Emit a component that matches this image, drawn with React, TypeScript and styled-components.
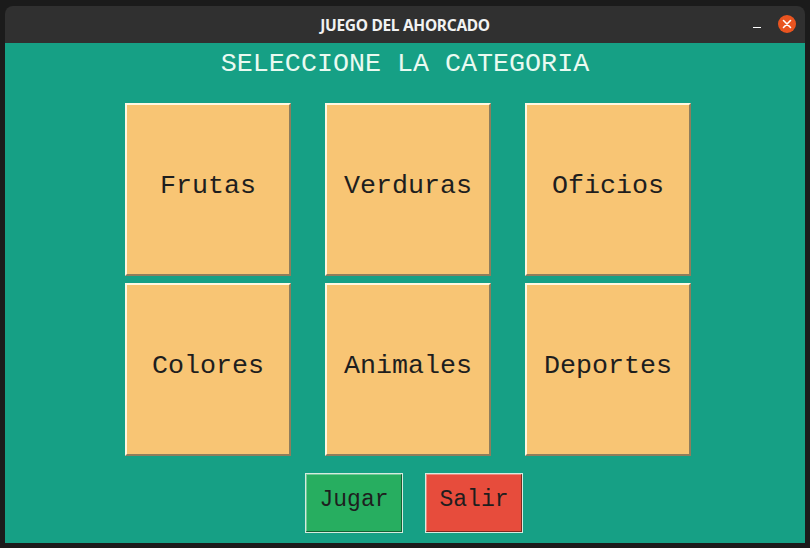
import styled, { createGlobalStyle } from "styled-components";

const GlobalStyle = createGlobalStyle`
  html, body {
    margin: 0;
    padding: 0;
    background: #1b1b1b;
  }
  body {
    width: 810px;
    height: 548px;
    overflow: hidden;
  }
`;

const Desktop = styled.div`
  width: 810px;
  height: 548px;
  padding: 6px 5px 0 5px;
  box-sizing: border-box;
  background: #1b1b1b;
`;

const Window = styled.div`
  width: 800px;
  height: 537px;
  display: flex;
  flex-direction: column;
  border-radius: 8px 8px 0 0;
  overflow: hidden;
`;

const TitleBar = styled.div`
  height: 37px;
  flex-shrink: 0;
  background: #303030;
  display: flex;
  align-items: center;
  justify-content: center;
  position: relative;
  font-family: "Noto Sans", "DejaVu Sans", sans-serif;
  font-weight: 700;
  font-size: 15.5px;
  color: #f2f2f2;
  letter-spacing: -0.3px;
`;

const Controls = styled.div`
  position: absolute;
  right: 9px;
  top: 9px;
  display: flex;
  align-items: center;
  gap: 17px;
`;

const Minimize = styled.div`
  width: 8px;
  height: 1px;
  margin-top: 6px;
  background: #ffffff;
`;

const CloseButton = styled.div`
  width: 18px;
  height: 18px;
  border-radius: 50%;
  background: #e95420;
  display: flex;
  align-items: center;
  justify-content: center;
`;

const Content = styled.div`
  flex: 1;
  background: #16a085;
  display: flex;
  flex-direction: column;
`;

const Heading = styled.div`
  font-family: "Liberation Mono", "Courier New", monospace;
  font-size: 26.7px;
  line-height: 30px;
  color: #eafaf1;
  text-align: center;
  padding-top: 6px;
`;

const Grid = styled.div`
  display: grid;
  grid-template-columns: repeat(3, 166px);
  grid-auto-rows: 173px;
  column-gap: 34px;
  row-gap: 7px;
  padding-left: 120px;
  margin-top: 24px;
`;

const Card = styled.button`
  box-sizing: border-box;
  width: 166px;
  height: 173px;
  margin: 0;
  padding: 0 0 7px 0;
  background: #f8c574;
  border-style: solid;
  border-width: 2px;
  border-color: #fff8e2 #8f7d5c #8f7d5c #fff8e2;
  font-family: "Liberation Mono", "Courier New", monospace;
  font-size: 26.7px;
  color: #1e1e1e;
  cursor: pointer;
`;

const Actions = styled.div`
  display: flex;
  gap: 22px;
  padding-left: 300px;
  margin-top: 17px;
`;

const ActionButton = styled.button<{ $bg: string }>`
  box-sizing: border-box;
  width: 98px;
  height: 60px;
  margin: 0;
  padding: 0 0 6px 0;
  background: ${(p) => p.$bg};
  border: 1px solid #d6ebdf;
  box-shadow: inset -1px -1px 0 rgba(0, 0, 0, 0.45), inset 1px 1px 0 rgba(255, 255, 255, 0.35);
  font-family: "Liberation Mono", "Courier New", monospace;
  font-size: 23px;
  color: #1e1e1e;
  cursor: pointer;
`;

const categories = ["Frutas", "Verduras", "Oficios", "Colores", "Animales", "Deportes"];

export default function App() {
  return (
    <>
      <GlobalStyle />
      <Desktop>
        <Window>
          <TitleBar>
            JUEGO DEL AHORCADO
            <Controls>
              <Minimize />
              <CloseButton>
                <svg width="10" height="10" viewBox="0 0 10 10">
                  <path d="M1.5 1.5 L8.5 8.5 M8.5 1.5 L1.5 8.5" stroke="#ffffff" strokeWidth="1.6" strokeLinecap="round" />
                </svg>
              </CloseButton>
            </Controls>
          </TitleBar>
          <Content>
            <Heading>SELECCIONE LA CATEGORIA</Heading>
            <Grid>
              {categories.map((c) => (
                <Card key={c}>{c}</Card>
              ))}
            </Grid>
            <Actions>
              <ActionButton $bg="#27ae60">Jugar</ActionButton>
              <ActionButton $bg="#e74c3c">Salir</ActionButton>
            </Actions>
          </Content>
        </Window>
      </Desktop>
    </>
  );
}
